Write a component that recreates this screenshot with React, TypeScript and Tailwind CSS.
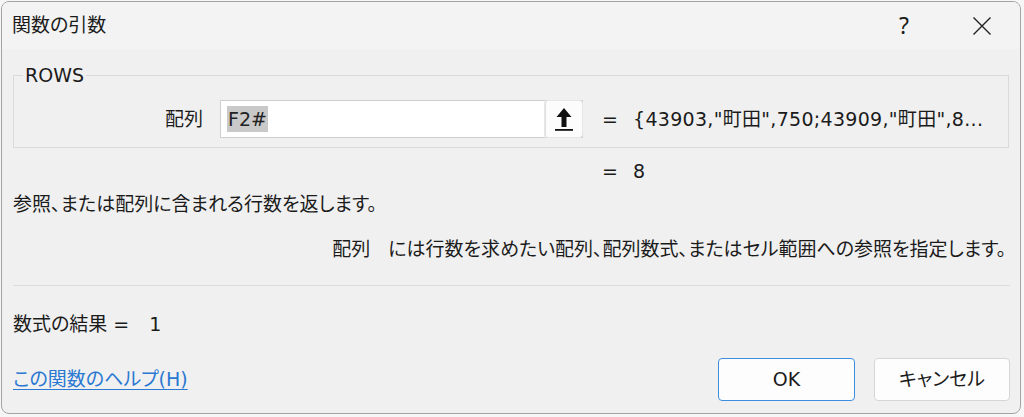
import React from 'react';

const font = { fontFamily: '"DejaVu Sans", "Noto Sans CJK JP", sans-serif' };

function CollapseIcon() {
  return (
    <svg width="20" height="26" viewBox="0 0 20 26" className="block">
      <path d="M10 2 L2.5 11 L7.5 11 L7.5 21 L12.5 21 L12.5 11 L17.5 11 Z" fill="#111" />
      <rect x="1" y="23" width="18" height="1.8" fill="#111" />
    </svg>
  );
}

function CloseIcon() {
  return (
    <svg width="20" height="20" viewBox="0 0 20 20">
      <path d="M1.5 1.5 L18.5 18.5 M18.5 1.5 L1.5 18.5" stroke="#222" strokeWidth="1.4" fill="none" />
    </svg>
  );
}

export default function App() {
  return (
    <div className="w-[1024px] h-[417px] bg-[#f6f6f6] overflow-hidden [font-feature-settings:'palt']" style={font}>
      <div className="ml-[1px] mt-[1px] w-[1020px] h-[413px] rounded-[8px] border border-[#a3a3a3] bg-[#f0f0f0] text-[#1b1b1b] flex flex-col overflow-hidden">
        {/* title bar */}
        <div className="h-[47px] bg-[#f3f3f3] flex items-center pl-[10px] shrink-0">
          <span className="text-[19px] flex-1">関数の引数</span>
          <span className="text-[23px] leading-none w-[20px] text-center mr-[58px]" style={{ fontFamily: '"Noto Sans", sans-serif' }}>?</span>
          <span className="mr-[28px] flex items-center"><CloseIcon /></span>
        </div>

        <div className="pl-[11px] pr-[10px] flex flex-col flex-1 text-[19px]">
          <fieldset className="mt-[15px] mr-[1px] border border-[#dadada] pl-0 pr-0 pt-[14px] pb-[9px]">
            <legend className="ml-[9px] px-[2px] leading-[22px]">ROWS</legend>
            <div className="flex items-center">
              <span className="w-[189px] text-right">配列</span>
              <div className="ml-[17px] w-[363px] h-[38px] bg-white border border-[#cfcfcf] flex items-center pl-[6px]">
                <span className="bg-[#c9c9c9] leading-[26px] px-[1px] text-[#222]">F2#</span>
                <div className="ml-auto w-[37px] h-[36px] border-l border-[#e0e0e0] bg-[#fcfcfc] rounded-[3px] shadow-[0_0_0_1px_#e6e6e6] flex items-center justify-center">
                  <CollapseIcon />
                </div>
              </div>
              <span className="ml-[19px] w-[31px]">=</span>
              <span className="whitespace-nowrap tracking-[0.3px]">{'{43903,"町田",750;43909,"町田",8...'}</span>
            </div>
          </fieldset>

          <div className="mt-[11px] pl-[589px] flex leading-[24px]">
            <span className="w-[31px]">=</span>
            <span>8</span>
          </div>

          <p className="mt-[9px] leading-[24px]">参照、または配列に含まれる行数を返します。</p>

          <p className="mt-[21px] leading-[24px] text-right pr-[4px] whitespace-nowrap">
            配列<span className="inline-block w-[18px]" />には行数を求めたい配列、配列数式、またはセル範囲への参照を指定します。
          </p>

          <div className="mt-[24px] border-t border-[#dcdcdc]" />

          <div className="mt-[26px] leading-[24px] flex">
            <span>数式の結果 =</span>
            <span className="ml-[20px]">1</span>
          </div>

          <div className="mt-[22px] flex items-center">
            <a href="#" className="text-[#2a78d2] underline underline-offset-[3px] flex-1">この関数のヘルプ(H)</a>
            <button className="w-[137px] h-[43px] rounded-[4px] border border-[#3d8ee0] bg-[#fdfdfd]">OK</button>
            <button className="ml-[19px] w-[136px] h-[43px] rounded-[4px] border border-[#d6d6d6] bg-[#fdfdfd]">キャンセル</button>
          </div>
        </div>
      </div>
    </div>
  );
}
